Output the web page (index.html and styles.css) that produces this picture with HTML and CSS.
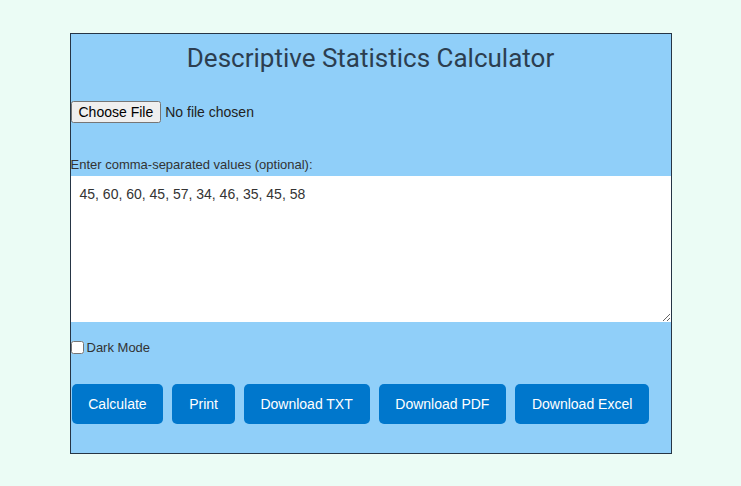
FILE: index.html
```html
<!DOCTYPE html>
<html lang="en">
<head>
    <meta charset="UTF-8">
    <meta name="viewport" content="width=device-width, initial-scale=1.0">
    <title>Descriptive Statistics Calculator</title>
    <link rel="stylesheet" href="styles.css">
</head>
<body>
    <div class="calculator">
        <h1>Descriptive Statistics Calculator</h1>

        <div class="file-row">
            <input type="file" id="file-input">
        </div>

        <label for="values" class="values-label">Enter comma-separated values (optional):</label>
        <textarea id="values">45, 60, 60, 45, 57, 34, 46, 35, 45, 58</textarea>

        <label class="dark-toggle">
            <input type="checkbox" id="dark-mode">
            Dark Mode
        </label>

        <div class="buttons">
            <button>Calculate</button>
            <button>Print</button>
            <button>Download TXT</button>
            <button>Download PDF</button>
            <button>Download Excel</button>
        </div>
    </div>
</body>
</html>
```

FILE: styles.css
```css
body {
    display: flex;
    justify-content: center;
    align-items: center;
    height: 100vh;
    margin: 0;
    background-color: #ebfcf5;
    font-family: 'Liberation Sans', Arial, sans-serif;
}

.calculator {
    width: 602px;
    height: 421px;
    box-sizing: border-box;
    border: 1px solid #263545;
    background-color: #90cff9;
    display: flex;
    flex-direction: column;
}

h1 {
    font-family: Roboto, sans-serif;
    font-weight: 400;
    font-size: 26px;
    line-height: 32px;
    color: #2c3e50;
    text-align: center;
    margin: 8px 0 0;
}

.file-row {
    margin-top: 27px;
    height: 22px;
}

#file-input {
    font-family: 'Liberation Sans', Arial, sans-serif;
    font-size: 14px;
    color: #222;
}

.values-label {
    margin-top: 34px;
    font-size: 13px;
    line-height: 15px;
    color: #333;
}

textarea {
    margin-top: 4px;
    height: 146px;
    width: 100%;
    box-sizing: border-box;
    border: none;
    padding: 10px 9px;
    font-family: 'Liberation Sans', Arial, sans-serif;
    font-size: 14px;
    color: #333;
    background: #fff;
}

.dark-toggle {
    margin-top: 18px;
    display: flex;
    align-items: center;
    font-size: 13px;
    line-height: 16px;
    color: #333;
}

.dark-toggle input {
    margin: 0 3px 0 0;
    width: 13px;
    height: 13px;
}

.buttons {
    display: flex;
    gap: 9px;
    margin-top: 28px;
    padding-left: 1px;
}

button {
    height: 40px;
    padding: 0 16.75px;
    background-color: #0077cc;
    color: white;
    border: none;
    border-radius: 5px;
    font-family: 'Liberation Sans', Arial, sans-serif;
    font-size: 14px;
    cursor: pointer;
}

button:hover {
    background-color: #005fa3;
}
```
